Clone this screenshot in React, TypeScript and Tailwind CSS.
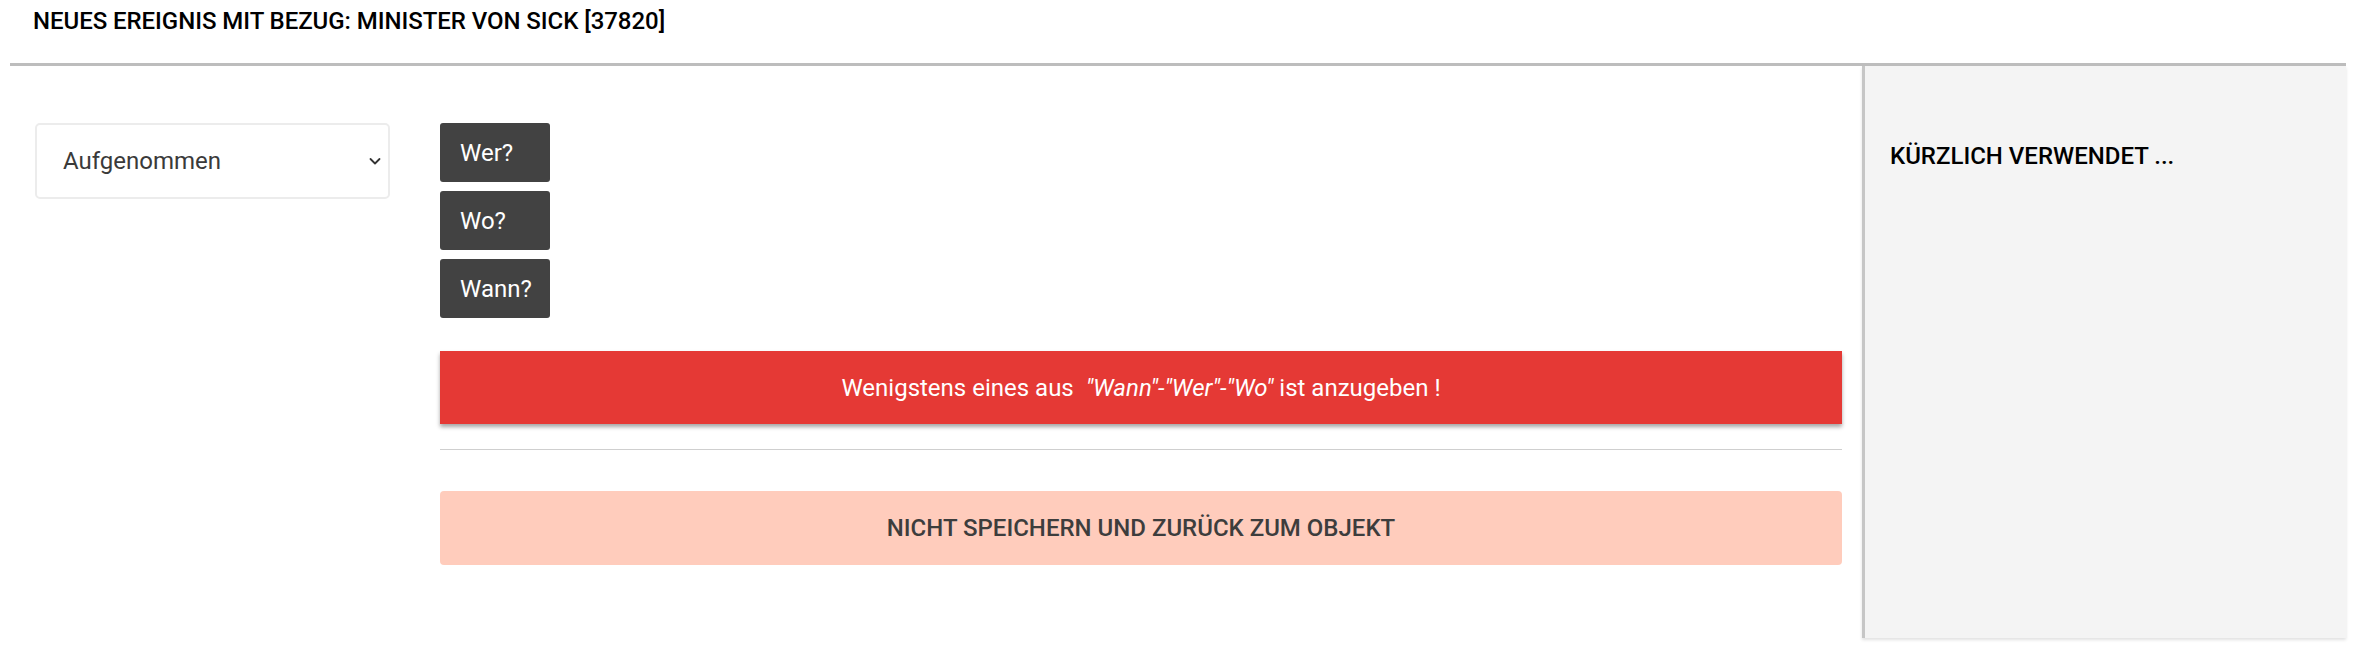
import React from "react";

export default function App() {
  return (
    <div className="w-[2355px] h-[652px] bg-white font-['Roboto',sans-serif] text-black overflow-hidden">
      <div className="h-[63px] pl-[33px] pt-[7px]">
        <h1 className="text-[24px] leading-[28px] font-medium tracking-[-0.05px]">
          NEUES EREIGNIS MIT BEZUG: MINISTER VON SICK [37820]
        </h1>
      </div>
      <div className="ml-[10px] mr-[9px] border-t-[3px] border-[#bdbdbd] flex">
        <div className="w-[430px] shrink-0 pl-[25px] pt-[57px]">
          <div className="w-[355px] h-[76px] border-2 border-[#ececec] rounded-[5px] flex items-center justify-between pl-[26px] pr-[5px]">
            <span className="text-[24px] text-[#3a3a3a]">Aufgenommen</span>
            <svg width="16" height="10" viewBox="0 0 16 10" fill="none">
              <path d="M3.5 3l4.5 4.5 4.5-4.5" stroke="#333" strokeWidth="1.8" strokeLinecap="round" strokeLinejoin="round" />
            </svg>
          </div>
        </div>
        <div className="w-[1402px] shrink-0 pt-[57px] flex flex-col">
          <div className="flex flex-col gap-[9px]">
            {["Wer?", "Wo?", "Wann?"].map((t) => (
              <button
                key={t}
                className="w-[110px] h-[59px] bg-[#424242] text-white text-[24px] text-left pl-[20px] rounded-[3px]"
              >
                {t}
              </button>
            ))}
          </div>
          <div className="mt-[33px] h-[73px] bg-[#e53935] text-white text-[24px] flex items-center justify-center shadow-[0_3px_4px_rgba(0,0,0,0.35)]">
            <span>
              Wenigstens eines aus&nbsp; <i>"Wann"-"Wer"-"Wo"</i> ist anzugeben !
            </span>
          </div>
          <div className="mt-[25px] border-t border-[#cfcfcf]" />
          <button className="mt-[41px] h-[74px] bg-[#ffccbc] rounded-[4px] text-[24px] font-medium text-[#3d3d3d] flex items-center justify-center">
            NICHT SPEICHERN UND ZURÜCK ZUM OBJEKT
          </button>
        </div>
        <div className="ml-[20px] flex-1 h-[572px] bg-[#f4f4f4] border-l-[3px] border-[#c6c6c6] shadow-[0_2px_3px_rgba(0,0,0,0.12)] pl-[25px] pt-[76px]">
          <h2 className="text-[24px] leading-[28px] font-medium">KÜRZLICH VERWENDET ...</h2>
        </div>
      </div>
    </div>
  );
}
